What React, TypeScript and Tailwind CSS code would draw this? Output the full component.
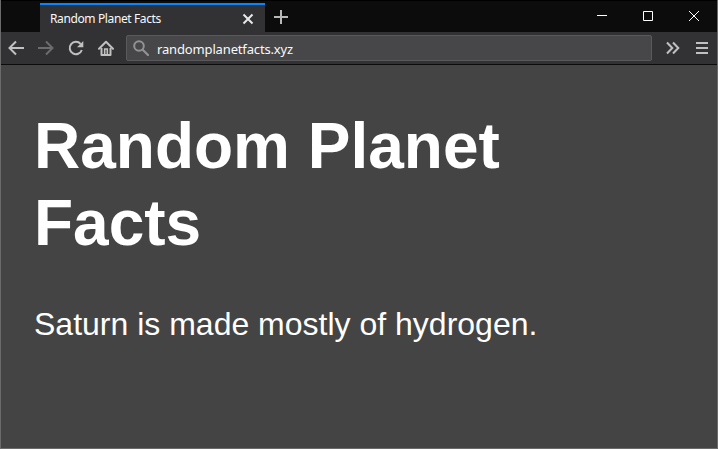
import type { ReactNode } from "react";

function Icon({ children, className }: { children: ReactNode; className: string }) {
  return (
    <svg
      viewBox="0 0 16 16"
      fill="none"
      stroke="currentColor"
      strokeWidth={2}
      className={"size-4 shrink-0 " + className}
    >
      {children}
    </svg>
  );
}

function TabStrip() {
  return (
    <div className="flex h-8 bg-[#0c0c0c] border-t border-black">
      <div className="mt-0.5 ml-[39px] flex h-[29px] w-[225px] items-center border-t-2 border-[#0a84ff] bg-[#323234] pl-[10px] pr-[9px]">
        <span className="w-[160px] whitespace-nowrap font-['Noto_Sans','Open_Sans',sans-serif] text-[12px] leading-4 tracking-[-0.38px] text-[#f9f9fa]">
          Random Planet Facts
        </span>
        <Icon className="ml-auto text-[#e8e8e9]">
          <path d="M3.5 3.5 12.5 12.5M12.5 3.5 3.5 12.5" />
        </Icon>
      </div>
      <Icon className="mt-2 ml-2 text-[#b8b8b8]">
        <path d="M8 1V15M1 8H15" />
      </Icon>
      <div className="ml-auto flex pt-[7px] pr-[15px]">
        <Icon className="mr-[30px] text-white">
          <path strokeWidth="1" d="M3 7.5H13" />
        </Icon>
        <Icon className="mr-[30px] text-white">
          <path strokeWidth="1" d="M3.5 3.5h9v9h-9z" />
        </Icon>
        <Icon className="text-white">
          <path strokeWidth="1" d="M3 3 13 13M13 3 3 13" />
        </Icon>
      </div>
    </div>
  );
}

function Toolbar() {
  return (
    <div className="flex h-[33px] items-center border-b border-[#0c0c0d] bg-[#323234] pl-[7px] pr-2 text-[#c0c0c0]">
      <Icon className="">
        <path d="M1.5 8H16M8 1.5 1.5 8 8 14.5" />
      </Icon>
      <Icon className="ml-[14px] text-[#6c6c6e]">
        <path d="M0 8H14.5M8 1.5 14.5 8 8 14.5" />
      </Icon>
      <Icon className="ml-[14px]">
        <path d="M13.8 10A6.2 6.2 0 1 1 12.6 3.9" />
        <path d="M15.3 1v6.3H9z" fill="currentColor" stroke="none" />
      </Icon>
      <Icon className="ml-[14px]">
        <path d="M1 8.7 8 1.7 15 8.7" strokeLinecap="round" strokeLinejoin="round" />
        <path d="M3.5 8V15H12.5V8" strokeLinejoin="round" />
        <path d="M6.7 15V9H9.3V15" strokeWidth="1.6" />
      </Icon>
      <div className="ml-3 flex h-[26px] w-[526px] items-center rounded-[2px] border border-[#5a5a5c] bg-[#474749] pl-[6px]">
        <Icon className="text-[#929294]">
          <circle cx="6" cy="6" r="4.8" />
          <path d="M9.7 9.7 15 15" strokeWidth="2.2" strokeLinecap="round" />
        </Icon>
        <span className="mt-0.5 ml-2 whitespace-nowrap font-['Noto_Sans','Open_Sans',sans-serif] text-[13px] leading-5 tracking-[-0.15px] text-[#f9f9fa]">
          randomplanetfacts.xyz
        </span>
      </div>
      <Icon className="ml-[13px]">
        <path d="M2 2.5 7.3 8 2 13.5M8 2.5 13.3 8 8 13.5" />
      </Icon>
      <Icon className="ml-auto">
        <path d="M3 3H15M3 8H15M3 13H15" />
      </Icon>
    </div>
  );
}

export default function App() {
  return (
    <div className="flex h-[449px] w-[718px] flex-col border-r border-b border-l border-[#6b6b6b] bg-[#444444]">
      <TabStrip />
      <Toolbar />
      <main className="flex-1 pt-[43px] pl-[33px] font-['Liberation_Sans',Arial,sans-serif] text-white">
        <h1 className="w-[520px] text-[64px] leading-[77px] font-bold">Random Planet Facts</h1>
        <p className="mt-11 text-[32px] leading-9">Saturn is made mostly of hydrogen.</p>
      </main>
    </div>
  );
}
